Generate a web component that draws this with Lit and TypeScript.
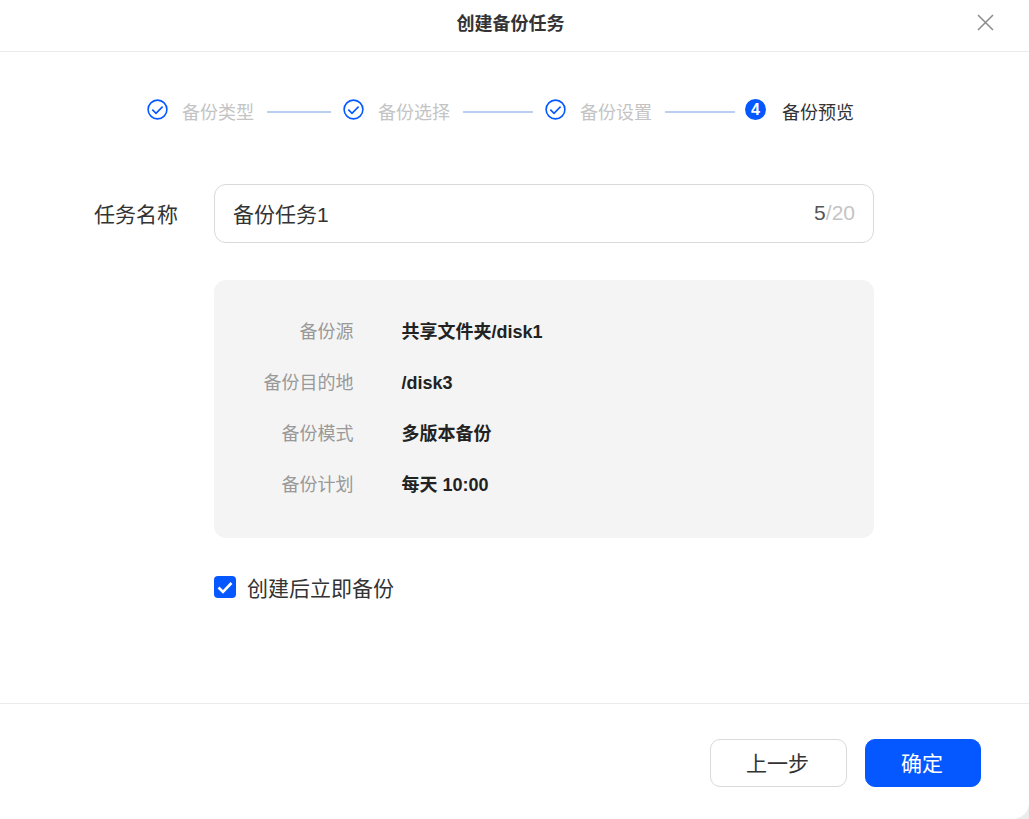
import {LitElement, css, html} from 'lit'
import {customElement} from 'lit/decorators.js'

const checkIcon = html`
  <svg class="step-icon" viewBox="0 0 21 21" width="21" height="21">
    <circle cx="10.5" cy="10.5" r="9.4" fill="none" stroke="#0558ff" stroke-width="1.6"/>
    <path d="M5.3 10.6l3.7 3.7 6.6-6.7" fill="none" stroke="#0558ff" stroke-width="1.6"/>
  </svg>
`

const steps = [
  {label: '备份类型', line: 64, gap: 12},
  {label: '备份选择', line: 70, gap: 12},
  {label: '备份设置', line: 70, gap: 10},
]

const rows = [
  ['备份源', '共享文件夹/disk1'],
  ['备份目的地', '/disk3'],
  ['备份模式', '多版本备份'],
  ['备份计划', '每天 10:00'],
]

@customElement('app-root')
export class AppRoot extends LitElement {

  static styles = css`
    :host {
      display: block;
      height: 819px;
      background: #ececec;
      font-family: "Liberation Sans", Arial, "Noto Sans CJK SC", sans-serif;
      color: #333;
    }

    .dialog {
      display: flex;
      flex-direction: column;
      height: 819px;
      box-sizing: border-box;
      border-bottom-right-radius: 16px;
      background: #fff;
    }

    .header {
      position: relative;
      display: flex;
      align-items: center;
      justify-content: center;
      flex: none;
      height: 52px;
      box-sizing: border-box;
      padding: 0 8px 7px 0;
      border-bottom: 1px solid #eaeaea;
      font-size: 18px;
      font-weight: bold;
    }

    .close {
      position: absolute;
      top: 14px;
      right: 35px;
      width: 17px;
      height: 17px;
    }

    .steps {
      display: flex;
      align-items: center;
      height: 21px;
      margin-top: 47px;
      padding-left: 147px;
      font-size: 18px;
      color: #c4c4c4;
    }

    .steps span {
      margin-top: 2px;
    }

    .step-icon {
      flex: none;
      margin-right: 14px;
    }

    .step-line {
      height: 2px;
      margin-top: 5px;
      margin-left: 13px;
      background: #bbcff0;
    }

    .step-num {
      display: flex;
      align-items: center;
      justify-content: center;
      flex: none;
      width: 21px;
      height: 21px;
      margin-right: 16px;
      border-radius: 50%;
      background: #0558ff;
      color: #fff;
      font-size: 16px;
      font-weight: bold;
    }

    .steps .current {
      color: #333;
    }

    .content {
      flex: 1;
      padding: 64px 155px 0 94px;
    }

    .name-row {
      display: flex;
      align-items: center;
      font-size: 21px;
    }

    .name-label {
      flex: none;
      width: 120px;
      padding-bottom: 2px;
    }

    .input {
      display: flex;
      align-items: center;
      justify-content: space-between;
      flex: 1;
      height: 59px;
      box-sizing: border-box;
      padding: 0 18px 2px 18px;
      border: 1px solid #d9d9d9;
      border-radius: 12px;
    }

    .count {
      font-size: 21px;
      color: #555;
    }

    .count span {
      color: #c4c4c4;
    }

    .summary {
      display: flex;
      flex-direction: column;
      gap: 30px;
      margin: 37px 0 0 120px;
      padding: 42px 0;
      border-radius: 12px;
      background: #f4f4f4;
      font-size: 18px;
      line-height: 21px;
    }

    .summary-row {
      display: flex;
    }

    .summary-label {
      flex: none;
      width: 139.5px;
      margin-right: 48px;
      text-align: right;
      color: #999;
    }

    .summary-value {
      font-weight: bold;
      color: #222;
    }

    .auto {
      display: flex;
      align-items: center;
      gap: 11px;
      margin: 34px 0 0 120px;
      font-size: 21px;
    }

    .checkbox {
      flex: none;
      width: 22px;
      height: 22px;
      border-radius: 4px;
      background: #0558ff;
    }

    .footer {
      display: flex;
      justify-content: flex-end;
      gap: 18px;
      flex: none;
      height: 116px;
      box-sizing: border-box;
      padding: 35px 48px 0 0;
      border-top: 1px solid #eaeaea;
    }

    .btn {
      height: 48px;
      box-sizing: border-box;
      padding: 0 2px 2px 0;
      border: 1px solid #d9d9d9;
      border-radius: 10px;
      background: #fff;
      color: #333;
      font: inherit;
      font-size: 21px;
    }

    .btn-prev {
      width: 137px;
    }

    .btn-ok {
      width: 116px;
      border-color: #0558ff;
      background: #0558ff;
      color: #fff;
    }
  `

  render() {
    return html`
      <div class="dialog">
        <div class="header">
          创建备份任务
          <svg class="close" viewBox="0 0 17 17">
            <path d="M1 1l15 15M16 1L1 16" fill="none" stroke="#8a8a8a" stroke-width="1.5"/>
          </svg>
        </div>
        <div class="steps">
          ${steps.map(s => html`
            ${checkIcon}
            <span>${s.label}</span>
            <div class="step-line" style="width:${s.line}px;margin-right:${s.gap}px"></div>
          `)}
          <div class="step-num">4</div>
          <span class="current">备份预览</span>
        </div>
        <div class="content">
          <div class="name-row">
            <div class="name-label">任务名称</div>
            <div class="input">
              <span>备份任务1</span>
              <div class="count">5<span>/20</span></div>
            </div>
          </div>
          <div class="summary">
            ${rows.map(r => html`
              <div class="summary-row">
                <div class="summary-label">${r[0]}</div>
                <div class="summary-value">${r[1]}</div>
              </div>
            `)}
          </div>
          <div class="auto">
            <div class="checkbox">
              <svg viewBox="0 0 22 22" width="22" height="22">
                <path d="M4.5 11.5l4.5 4.5 8.5-9" fill="none" stroke="#fff" stroke-width="2.6"/>
              </svg>
            </div>
            创建后立即备份
          </div>
        </div>
        <div class="footer">
          <button class="btn btn-prev">上一步</button>
          <button class="btn btn-ok">确定</button>
        </div>
      </div>
    `
  }
}
